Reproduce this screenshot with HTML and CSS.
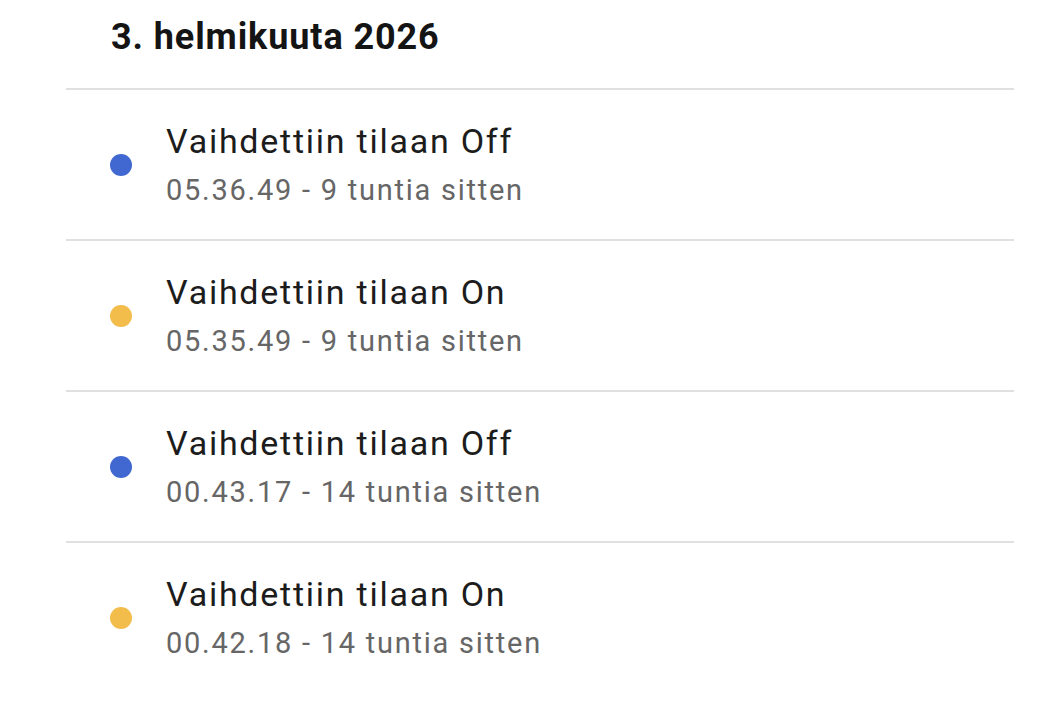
FILE: index.html
```html
<!DOCTYPE html>
<html lang="fi">
<head>
<meta charset="utf-8">
<title>Logbook</title>
<link rel="stylesheet" href="styles.css">
</head>
<body>
<div class="logbook">
  <div class="date">3. helmikuuta 2026</div>
  <div class="entry">
    <span class="dot dot-off"></span>
    <div class="text">
      <div class="primary">Vaihdettiin tilaan Off</div>
      <div class="secondary">05.36.49 - 9 tuntia sitten</div>
    </div>
  </div>
  <div class="entry">
    <span class="dot dot-on"></span>
    <div class="text">
      <div class="primary">Vaihdettiin tilaan On</div>
      <div class="secondary">05.35.49 - 9 tuntia sitten</div>
    </div>
  </div>
  <div class="entry">
    <span class="dot dot-off"></span>
    <div class="text">
      <div class="primary">Vaihdettiin tilaan Off</div>
      <div class="secondary">00.43.17 - 14 tuntia sitten</div>
    </div>
  </div>
  <div class="entry">
    <span class="dot dot-on"></span>
    <div class="text">
      <div class="primary">Vaihdettiin tilaan On</div>
      <div class="secondary">00.42.18 - 14 tuntia sitten</div>
    </div>
  </div>
</div>
</body>
</html>
```
FILE: styles.css
```css
html, body {
  margin: 0;
  padding: 0;
  background: #ffffff;
}
body {
  font-family: Roboto, "Liberation Sans", sans-serif;
  -webkit-font-smoothing: antialiased;
}
.logbook {
  width: 948px;
  margin-left: 66px;
}
.date {
  font-size: 36px;
  line-height: 44px;
  font-weight: 700;
  color: #141414;
  letter-spacing: 0.9px;
  padding-left: 45px;
  margin-top: 15px;
  margin-bottom: 29px;
}
.entry {
  display: flex;
  align-items: center;
  height: 149px;
  border-top: 2px solid #e0e0e0;
}
.dot {
  flex: none;
  width: 22px;
  height: 22px;
  border-radius: 50%;
  margin-left: 44px;
  margin-right: 34px;
}
.dot-off { background: #4068d0; }
.dot-on { background: #f3bd4c; }
.text {
  display: flex;
  flex-direction: column;
  gap: 11px;
}
.primary {
  font-size: 34px;
  line-height: 40px;
  color: #1c1c1c;
  letter-spacing: 1.75px;
}
.secondary {
  font-size: 29px;
  line-height: 36px;
  color: #666666;
  letter-spacing: 1.75px;
}
```
